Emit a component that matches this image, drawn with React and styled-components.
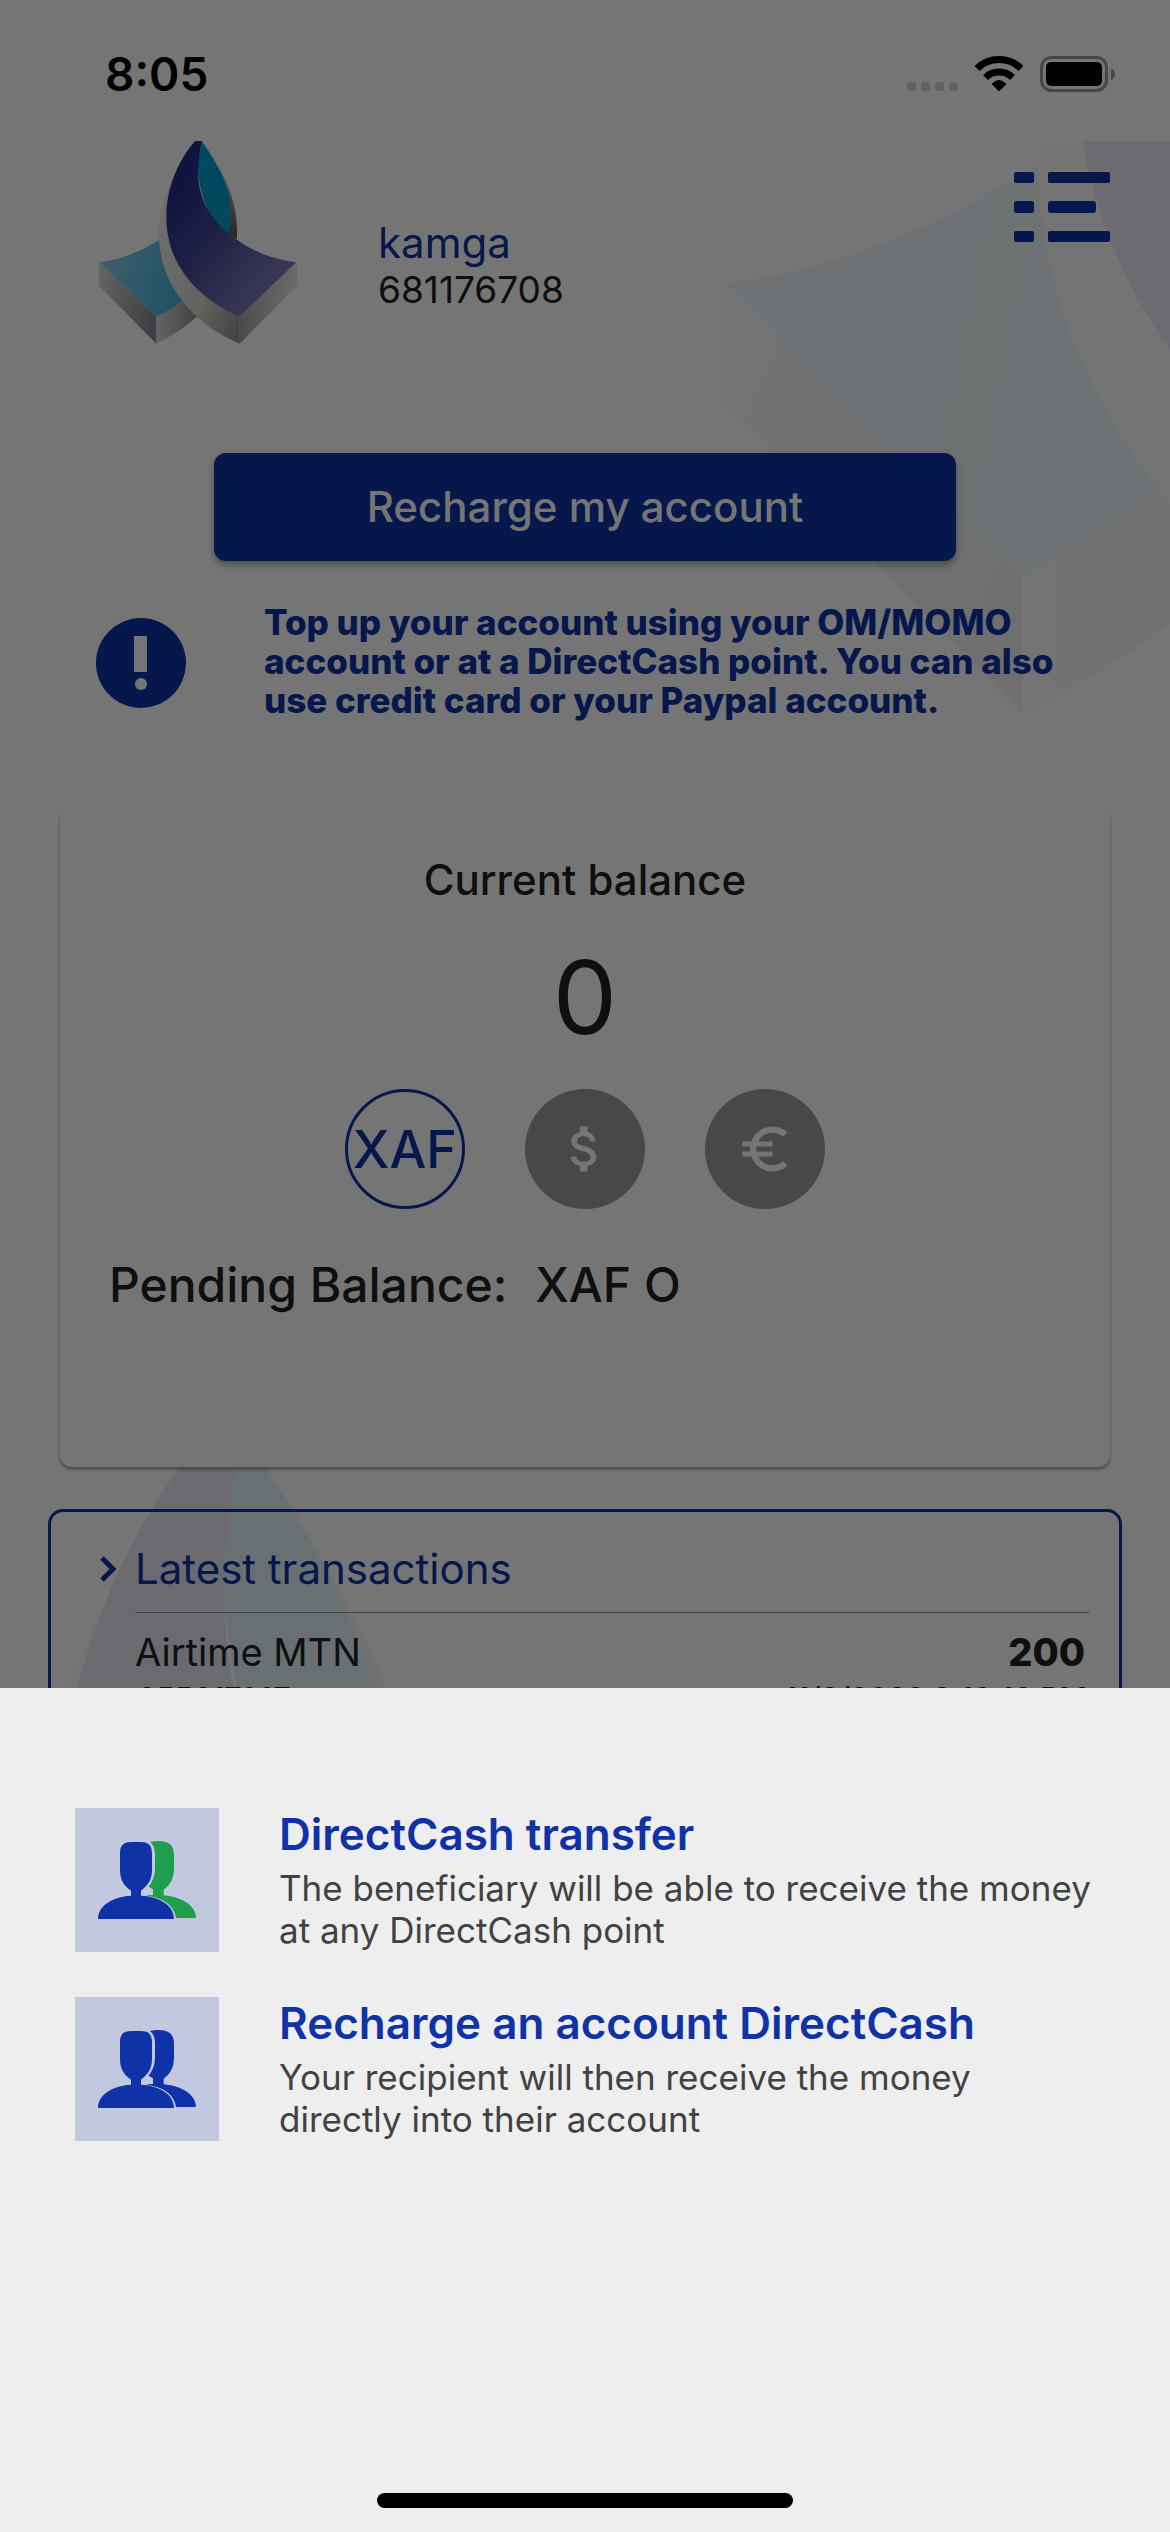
import React from "react";
import styled, { createGlobalStyle } from "styled-components";
import { MdAttachMoney, MdEuroSymbol } from "react-icons/md";

const BLUE = "#0f32a6";
const INK = "#212121";

const GlobalStyle = createGlobalStyle`
  *, *::before, *::after { box-sizing: border-box; }
  body { margin: 0; background: #fff; font-family: Inter, "Liberation Sans", sans-serif; color: ${INK}; }
  h1, h2, p, ul, dl, dd { margin: 0; padding: 0; }
  button { font: inherit; color: inherit; border: 0; background: none; padding: 0; cursor: pointer; }
`;

const Screen = styled.div`
  position: relative;
  height: 100vh;
  overflow: hidden;
  display: flex;
  flex-direction: column;
`;

const StatusBar = styled.header`
  flex: none;
  height: 141px;
  padding: 0 54px 0 105px;
  display: flex;
  justify-content: space-between;
`;

const Clock = styled.time`
  margin-top: 46px;
  font-size: 46px;
  line-height: 56px;
  font-weight: 600;
  color: #000;
`;

const StatusIcons = styled.svg`
  margin-top: 50px;
  width: 210px;
  height: 48px;
`;

const Backdrop = styled.div`
  position: absolute;
  inset: 141px 0 0;
  overflow: hidden;
  opacity: 0.1;
  pointer-events: none;
`;

const Watermark = styled.div`
  position: absolute;
  width: 1026px;
  height: 1075px;
  left: ${(p) => p.$left}px;
  top: ${(p) => p.$top}px;
`;

const LogoSvg = styled.svg`
  display: block;
  width: 100%;
  height: 100%;
`;

const Page = styled.main`
  position: relative;
  flex: none;
  display: flex;
  flex-direction: column;
`;

const Profile = styled.section`
  display: flex;
  align-items: flex-start;
  height: 312px;
  padding: 0 60px 0 99px;
`;

const LogoBox = styled.div`
  width: 198px;
  height: 203px;
`;

const Identity = styled.div`
  margin: 77px auto 0 81px;
`;

const UserName = styled.h1`
  font-size: 42px;
  line-height: 50px;
  font-weight: 400;
  color: ${BLUE};
`;

const UserPhone = styled.p`
  font-size: 37px;
  line-height: 44px;
`;

const MenuButton = styled.button`
  margin-top: 31px;
  width: 96px;
  height: 70px;
  svg { display: block; width: 100%; height: 100%; }
`;

const RechargeButton = styled.button`
  && {
    align-self: center;
    width: calc(100% - 428px);
    height: 108px;
    padding-bottom: 2px;
    border-radius: 12px;
    background: ${BLUE};
    color: #fff;
    font-size: 42px;
    font-weight: 500;
    box-shadow: 0 5px 6px rgba(0, 0, 0, 0.22), 0 2px 8px rgba(0, 0, 0, 0.14);
  }
`;

const Notice = styled.section`
  display: flex;
  align-items: flex-start;
  gap: 78px;
  height: 246px;
  padding: 42px 96px 0;
`;

const NoticeIcon = styled.svg`
  flex: none;
  width: 90px;
  height: 90px;
  margin-top: 15px;
`;

const NoticeText = styled.p`
  font-size: 35px;
  line-height: 39px;
  font-weight: 800;
  color: ${BLUE};
  white-space: nowrap;
`;

const BalanceCard = styled.section`
  margin: 0 60px;
  height: 660px;
  padding: 48px 49px;
  border-radius: 12px;
  background: #fff;
  box-shadow: 0 3px 3px rgba(0, 0, 0, 0.26), 0 2px 3px rgba(0, 0, 0, 0.12);
`;

const CardTitle = styled.h2`
  font-size: 42px;
  line-height: 50px;
  font-weight: 500;
  text-align: center;
`;

const Amount = styled.p`
  margin-top: 30px;
  font-size: 102px;
  line-height: 124px;
  text-align: center;
`;

const Currencies = styled.div`
  margin-top: 30px;
  display: flex;
  justify-content: center;
  gap: 60px;
`;

const Currency = styled.button`
  && {
    width: 120px;
    height: 120px;
    display: flex;
    align-items: center;
    justify-content: center;
    border-radius: 50%;
    border: ${(p) => (p.$active ? `3px solid ${BLUE}` : "0")};
    background: ${(p) => (p.$active ? "#fff" : "#9e9e9e")};
    color: ${(p) => (p.$active ? BLUE : "#fff")};
    font-size: 52px;
    font-weight: 500;
  }
`;

const Pending = styled.dl`
  margin-top: 47px;
  display: flex;
  gap: 28px;
  font-size: 48px;
  line-height: 58px;
  font-weight: 500;
`;

const Transactions = styled.section`
  margin: 42px 48px 0;
  height: 640px;
  padding: 30px 30px 0 42px;
  border: 3px solid ${BLUE};
  border-radius: 15px;
  display: grid;
  grid-template-columns: 42px 1fr;
  align-content: start;
`;

const Chevron = styled.svg`
  width: 32px;
  height: 54px;
`;

const TransactionsTitle = styled.h2`
  font-size: 42px;
  line-height: 54px;
  height: 70px;
  font-weight: 400;
  color: ${BLUE};
`;

const TransactionList = styled.ul`
  grid-column: 2;
  list-style: none;
  border-top: 1px solid #949494;
  padding-top: 16px;
`;

const Transaction = styled.li`
  display: grid;
  grid-template-columns: 1fr auto;
  font-size: 38px;
  line-height: 46px;
`;

const Total = styled.strong`
  padding-right: 4px;
  font-weight: 800;
  text-align: right;
`;

const Detail = styled.span`
  padding: 5px 2px 0;
  font-size: 30px;
  line-height: 36px;
  font-weight: 500;
`;

const Overlay = styled.div`
  position: absolute;
  inset: 0;
  display: flex;
  flex-direction: column;
  justify-content: flex-end;
  background: rgba(0, 0, 0, 0.54);
`;

const Sheet = styled.section`
  display: flex;
  flex-direction: column;
  min-height: calc(100vh / 3);
  padding: 120px 75px 24px;
  background: #eee;
`;

const Options = styled.div`
  display: flex;
  flex-direction: column;
  gap: 45px;
`;

const Option = styled.button`
  && {
    display: flex;
    align-items: flex-start;
    gap: 60px;
    text-align: left;
    color: #424242;
  }
`;

const OptionTile = styled.span`
  flex: none;
  width: 144px;
  height: 144px;
  background: #c3c8e1;
  svg { display: block; width: 100%; height: 100%; }
`;

const OptionBody = styled.span`
  display: flex;
  flex-direction: column;
  white-space: nowrap;
`;

const OptionTitle = styled.span`
  margin-bottom: 7px;
  font-size: 44px;
  line-height: 52px;
  font-weight: 600;
  color: ${BLUE};
`;

const OptionText = styled.span`
  font-size: 35px;
  line-height: 42px;
`;

const HomeIndicator = styled.div`
  width: 416px;
  height: 15px;
  margin: auto auto 0;
  border-radius: 8px;
  background: #000;
`;

function Logo({ id }) {
  const g = (name) => `url(#${id}-${name})`;
  return (
    <LogoSvg viewBox="57 63 594 609" preserveAspectRatio="none" aria-hidden="true">
      <defs>
        <linearGradient id={`${id}-sky`} x1="0" y1="0.4" x2="1" y2="0.6">
          <stop offset="0" stopColor="#8ccdec" />
          <stop offset="1" stopColor="#42b3da" />
        </linearGradient>
        <linearGradient id={`${id}-navy`} x1="0.1" y1="0.1" x2="0.8" y2="0.9">
          <stop offset="0.1" stopColor="#222e8a" />
          <stop offset="0.45" stopColor="#424496" />
          <stop offset="1" stopColor="#8380bc" />
        </linearGradient>
        <linearGradient id={`${id}-side`} x1="0" y1="0" x2="1" y2="0.6">
          <stop offset="0" stopColor="#e0e0dc" />
          <stop offset="1" stopColor="#888a90" />
        </linearGradient>
        <linearGradient id={`${id}-front`}>
          <stop offset="0" stopColor="#dcdcd6" />
          <stop offset="1" stopColor="#8c8c8c" />
        </linearGradient>
        <linearGradient id={`${id}-stripe`} x1="0" y1="0.2" x2="1" y2="1">
          <stop offset="0" stopColor="#f0f0ee" />
          <stop offset="0.6" stopColor="#d6d6d0" />
          <stop offset="1" stopColor="#8c8c8c" />
        </linearGradient>
        <linearGradient id={`${id}-right`}>
          <stop offset="0" stopColor="#9d9fa6" />
          <stop offset="0.35" stopColor="#c0c4c2" />
          <stop offset="1" stopColor="#e8e8e3" />
        </linearGradient>
        <linearGradient id={`${id}-edge`} x1="0" y1="0" x2="0" y2="1">
          <stop offset="0" stopColor="#c4c4c4" />
          <stop offset="1" stopColor="#555" />
        </linearGradient>
        <linearGradient id={`${id}-cyan`} x1="0" y1="0" x2="0" y2="1">
          <stop offset="0" stopColor="#009fd0" />
          <stop offset="1" stopColor="#0a9dc8" />
        </linearGradient>
      </defs>
      <path fill={g("sky")} d="M57 427C120 419 178 397 237 360L262 450L310 541Q272 571 229 591Z" />
      <path fill={g("side")} d="M57 427L229 591V671L57 497Z" />
      <path fill={g("front")} d="M229 591Q272 571 310 541L354 587Q299 637 229 671Z" />
      <path fill={g("edge")} d="M410 134C450 195 475 270 471 358L440 338Z" />
      <path fill={g("cyan")} d="M361 63H365C432 157 465 235 447 342C365 285 340 165 361 63Z" />
      <path fill={g("stripe")} d="M283 165C245 235 235 290 238 360C243 500 345 615 479 671V591L300 450Z" />
      <path fill={g("navy")} d="M345 63H365C345 165 345 255 447 340C500 388 570 417 649 427L479 591C345 530 259 430 259 290C259 200 299 115 345 63Z" />
      <path fill={g("right")} d="M479 591L651 427V497L479 671Z" />
    </LogoSvg>
  );
}

function PeopleIcon({ back }) {
  return (
    <svg viewBox="45 54 432 432" aria-hidden="true">
      <path fill={back} d="M270 156C278 153 288 153 296 153C326 153 342 165 342 195V235C342 265 331 285 311 299V316C370 321 408 350 408 384H348C344 346 306 323 262 318V316L279 315V298L266 290C282 270 285 250 285 232V195C285 175 280 164 270 156Z" />
      <path fill={BLUE} d="M180 192C180 165 190 156 215 156H241C266 156 276 165 276 192V240C276 270 262 288 243 302V317C302 320 342 348 342 387H114C114 348 156 320 213 317V302C192 288 180 270 180 240Z" />
    </svg>
  );
}

const OPTIONS = [
  {
    title: "DirectCash transfer",
    lines: ["The beneficiary will be able to receive the money", "at any DirectCash point"],
    back: "#1f9f4d",
  },
  {
    title: "Recharge an account DirectCash",
    lines: ["Your recipient will then receive the money", "directly into their account"],
    back: BLUE,
  },
];

export default function App() {
  return (
    <Screen>
      <GlobalStyle />
      <Backdrop>
        <Watermark $left={725} $top={-500}><Logo id="mark-a" /></Watermark>
        <Watermark $left={-290} $top={1291}><Logo id="mark-b" /></Watermark>
      </Backdrop>
      <StatusBar>
        <Clock>8:05</Clock>
        <StatusIcons viewBox="906 50 210 48" role="img" aria-label="Wi-Fi on, battery full">
          <g fill="#d5d5d5">
            <rect x="907" y="82" width="9" height="9" rx="3" />
            <rect x="921" y="82" width="9" height="9" rx="3" />
            <rect x="935" y="82" width="9" height="9" rx="3" />
            <rect x="949" y="82" width="9" height="9" rx="3" />
          </g>
          <g fill="none" stroke="#000" strokeWidth="7">
            <path d="M977 68.500A31.500 31.500 0 0 1 1021 68.500" />
            <path d="M985.500 77.500A19.500 19.500 0 0 1 1012.500 77.500" />
          </g>
          <path d="M999 91L992 84Q999 77 1006 84Z" stroke="#000" strokeWidth="1" />
          <rect x="1041.500" y="57.500" width="65" height="33" rx="10" fill="none" stroke="#9b9b9b" strokeWidth="3" />
          <rect x="1046" y="62" width="56" height="24" rx="5" />
          <path fill="#9b9b9b" d="M1111 68Q1115 70 1115 74T1111 80Z" />
        </StatusIcons>
      </StatusBar>
      <Page>
        <Profile>
          <LogoBox><Logo id="brand" /></LogoBox>
          <Identity>
            <UserName>kamga</UserName>
            <UserPhone>681176708</UserPhone>
          </Identity>
          <MenuButton aria-label="Menu">
            <svg viewBox="0 0 96 70" fill={BLUE}>
              <rect width="20" height="11" rx="2" /><rect x="34" width="62" height="11" rx="2" />
              <rect y="29" width="20" height="12" rx="2" /><rect x="34" y="29" width="48" height="12" rx="3" />
              <rect y="59" width="20" height="11" rx="2" /><rect x="34" y="59" width="62" height="11" rx="2" />
            </svg>
          </MenuButton>
        </Profile>
        <RechargeButton>Recharge my account</RechargeButton>
        <Notice>
          <NoticeIcon viewBox="0 0 90 90" aria-hidden="true">
            <circle cx="45" cy="45" r="45" fill={BLUE} />
            <rect x="38" y="18" width="13" height="36" fill="#fff" />
            <circle cx="45" cy="66" r="6" fill="#fff" />
          </NoticeIcon>
          <NoticeText>
            Top up your account using your OM/MOMO<br />
            account or at a DirectCash point. You can also<br />
            use credit card or your Paypal account.
          </NoticeText>
        </Notice>
        <BalanceCard>
          <CardTitle>Current balance</CardTitle>
          <Amount>0</Amount>
          <Currencies>
            <Currency $active>XAF</Currency>
            <Currency aria-label="Dollar"><MdAttachMoney size={60} /></Currency>
            <Currency aria-label="Euro"><MdEuroSymbol size={60} /></Currency>
          </Currencies>
          <Pending>
            <dt>Pending Balance:</dt>
            <dd>XAF O</dd>
          </Pending>
        </BalanceCard>
        <Transactions>
          <Chevron viewBox="0 0 32 54" aria-hidden="true">
            <path d="M9 16L20 27L9 38" fill="none" stroke={BLUE} strokeWidth="5" />
          </Chevron>
          <TransactionsTitle>Latest transactions</TransactionsTitle>
          <TransactionList>
            <Transaction>
              <span>Airtime MTN</span>
              <Total>200</Total>
              <Detail>655617147</Detail>
              <Detail>11/2/2022 2:18:18 PM</Detail>
            </Transaction>
          </TransactionList>
        </Transactions>
      </Page>
      <Overlay>
        <Sheet role="dialog" aria-label="Transfer options">
          <Options>
            {OPTIONS.map((o) => (
              <Option key={o.title}>
                <OptionTile><PeopleIcon back={o.back} /></OptionTile>
                <OptionBody>
                  <OptionTitle>{o.title}</OptionTitle>
                  {o.lines.map((line) => <OptionText key={line}>{line}</OptionText>)}
                </OptionBody>
              </Option>
            ))}
          </Options>
          <HomeIndicator />
        </Sheet>
      </Overlay>
    </Screen>
  );
}
